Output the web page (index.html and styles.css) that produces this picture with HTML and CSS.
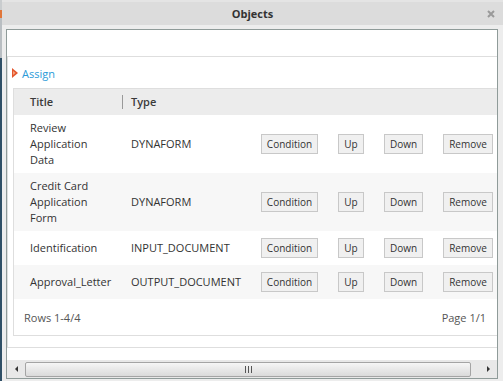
FILE: index.html
```html
<!DOCTYPE html>
<html lang="en">
<head>
    <meta charset="UTF-8">
    <title>Objects</title>
    <link rel="stylesheet" href="styles.css">
</head>
<body>
    <div class="dialog">
        <div class="titlebar">
            <span class="title">Objects</span>
            <svg class="close" width="8" height="8" viewBox="0 0 8 8"><path d="M1 1L7 7M7 1L1 7" stroke="#9a9a9a" stroke-width="2"/></svg>
        </div>
        <div class="dialog-body">
            <div class="scrollbox">
                <div class="viewport">
                    <div class="toolbar"></div>
                    <div class="panel">
                        <div class="assign">
                            <svg width="6" height="10" viewBox="0 0 6 10"><path d="M0 0L6 5L0 10Z" fill="#e4572e"/><path d="M1 3L3.5 5L1 7Z" fill="#f6a37f"/></svg>
                            <a href="#">Assign</a>
                        </div>
                        <div class="grid">
                            <div class="grid-row grid-head">
                                <div class="cell">Title</div>
                                <div class="cell"><span class="sep">Type</span></div>
                                <div class="cell"></div>
                                <div class="cell"></div>
                                <div class="cell"></div>
                                <div class="cell"></div>
                            </div>
                            <div class="grid-row">
                                <div class="cell">Review<br>Application<br>Data</div>
                                <div class="cell">DYNAFORM</div>
                                <div class="cell btn-cell"><button>Condition</button></div>
                                <div class="cell btn-cell"><button>Up</button></div>
                                <div class="cell btn-cell"><button>Down</button></div>
                                <div class="cell btn-cell"><button>Remove</button></div>
                            </div>
                            <div class="grid-row alt">
                                <div class="cell">Credit Card<br>Application<br>Form</div>
                                <div class="cell">DYNAFORM</div>
                                <div class="cell btn-cell"><button>Condition</button></div>
                                <div class="cell btn-cell"><button>Up</button></div>
                                <div class="cell btn-cell"><button>Down</button></div>
                                <div class="cell btn-cell"><button>Remove</button></div>
                            </div>
                            <div class="grid-row">
                                <div class="cell">Identification</div>
                                <div class="cell">INPUT_DOCUMENT</div>
                                <div class="cell btn-cell"><button>Condition</button></div>
                                <div class="cell btn-cell"><button>Up</button></div>
                                <div class="cell btn-cell"><button>Down</button></div>
                                <div class="cell btn-cell"><button>Remove</button></div>
                            </div>
                            <div class="grid-row alt">
                                <div class="cell">Approval_Letter</div>
                                <div class="cell">OUTPUT_DOCUMENT</div>
                                <div class="cell btn-cell"><button>Condition</button></div>
                                <div class="cell btn-cell"><button>Up</button></div>
                                <div class="cell btn-cell"><button>Down</button></div>
                                <div class="cell btn-cell"><button>Remove</button></div>
                            </div>
                            <div class="grid-foot">
                                <span>Rows 1-4/4</span>
                                <span>Page 1/1</span>
                            </div>
                        </div>
                    </div>
                </div>
                <div class="hscroll">
                    <div class="arrow left"></div>
                    <div class="thumb"><span class="grip"></span></div>
                    <div class="arrow right"></div>
                </div>
            </div>
        </div>
    </div>
</body>
</html>
```

FILE: styles.css
```css
body {
    margin: 0;
    font-family: "Open Sans", "Liberation Sans", sans-serif;
    font-size: 11px;
    color: #333;
    background: linear-gradient(to bottom, #c9ccce 0, #c9ccce 10px, #e0763a 10px, #e0763a 18px, #b9bec2 18px, #b9bec2 58px, #2f4f66 58px, #2f4f66 100%);
    background-size: 2px 100%;
    background-repeat: no-repeat;
    background-color: #e4e4e4;
    overflow: hidden;
}
.dialog {
    margin: 2px 0 0 2px;
    width: 501px;
    height: 379px;
    background: #ededed;
    overflow: hidden;
}
.titlebar {
    height: 23px;
    background: #dcdcdc;
    display: flex;
    align-items: center;
    justify-content: center;
    position: relative;
}
.title {
    font-weight: bold;
    font-size: 11px;
    color: #333;
}
.close {
    position: absolute;
    right: 8px;
    top: 8px;
}
.dialog-body {
    padding: 4px 0 0 4px;
}
.scrollbox {
    width: 492px;
    height: 350px;
    box-sizing: border-box;
    border: 1px solid #8f9b99;
    background: #fff;
    display: flex;
    flex-direction: column;
}
.viewport {
    flex: 1;
    overflow: hidden;
}
.toolbar {
    height: 26px;
}
.panel {
    width: 520px;
    height: 292px;
    box-sizing: border-box;
    border: 1px solid #dedede;
    padding-left: 5px;
}
.assign {
    height: 31px;
    display: flex;
    align-items: center;
    gap: 4px;
    margin-left: -1px;
    padding-top: 1px;
    box-sizing: border-box;
}
.assign a {
    color: #2a9ad8;
    text-decoration: none;
    font-size: 11px;
}
.grid {
    width: 491px;
    border: 1px solid #dedede;
}
.grid-row {
    display: grid;
    grid-template-columns: 108px 129px 77px 46px 59px 70px;
}
.grid-row.alt {
    background: #f7f7f7;
}
.cell {
    padding: 5px 0;
    line-height: 16px;
    display: flex;
    align-items: center;
}
.grid-row .cell:first-child {
    padding-left: 16px;
}
.grid-row .cell:nth-child(2) {
    padding-left: 9px;
}
.grid-head {
    background: #ececec;
    height: 26px;
}
.grid-head .cell {
    padding-top: 0;
    padding-bottom: 0;
    font-weight: 600;
    color: #3a3a3a;
}
.grid-head .cell:nth-child(2) {
    padding-left: 0;
}
.sep {
    border-left: 1px solid #999;
    line-height: 14px;
    padding-left: 8px;
}
.btn-cell {
    justify-content: center;
}
button {
    font-family: "Open Sans", "Liberation Sans", sans-serif;
    font-size: 10px;
    color: #333;
    height: 20px;
    margin: 2px 0;
    padding: 0 5px;
    background: #f0f0f0;
    border: 1px solid #c8c8c8;
    border-radius: 0;
}
.grid-foot {
    height: 36px;
    display: flex;
    align-items: center;
    justify-content: space-between;
    padding: 0 19px 0 10px;
    color: #555;
}
.hscroll {
    height: 18px;
    background: #e8e8e8;
    display: flex;
    align-items: center;
    margin-top: 12px;
}
.arrow {
    width: 18px;
    height: 18px;
    display: flex;
    align-items: center;
    justify-content: center;
}
.arrow.left::before {
    content: "";
    border-top: 3px solid transparent;
    border-bottom: 3px solid transparent;
    border-right: 3px solid #333;
}
.arrow.right {
    margin-left: 8px;
}
.arrow.right::before {
    content: "";
    border-top: 3px solid transparent;
    border-bottom: 3px solid transparent;
    border-left: 3px solid #333;
}
.thumb {
    width: 446px;
    height: 15px;
    box-sizing: border-box;
    border: 1px solid #a4a4a4;
    border-radius: 2px;
    background: linear-gradient(to bottom, #f6f6f6, #dadada);
    display: flex;
    align-items: center;
    justify-content: center;
}
.grip {
    width: 7px;
    height: 7px;
    background: repeating-linear-gradient(to right, #555 0, #555 1px, transparent 1px, transparent 3px);
}
```
